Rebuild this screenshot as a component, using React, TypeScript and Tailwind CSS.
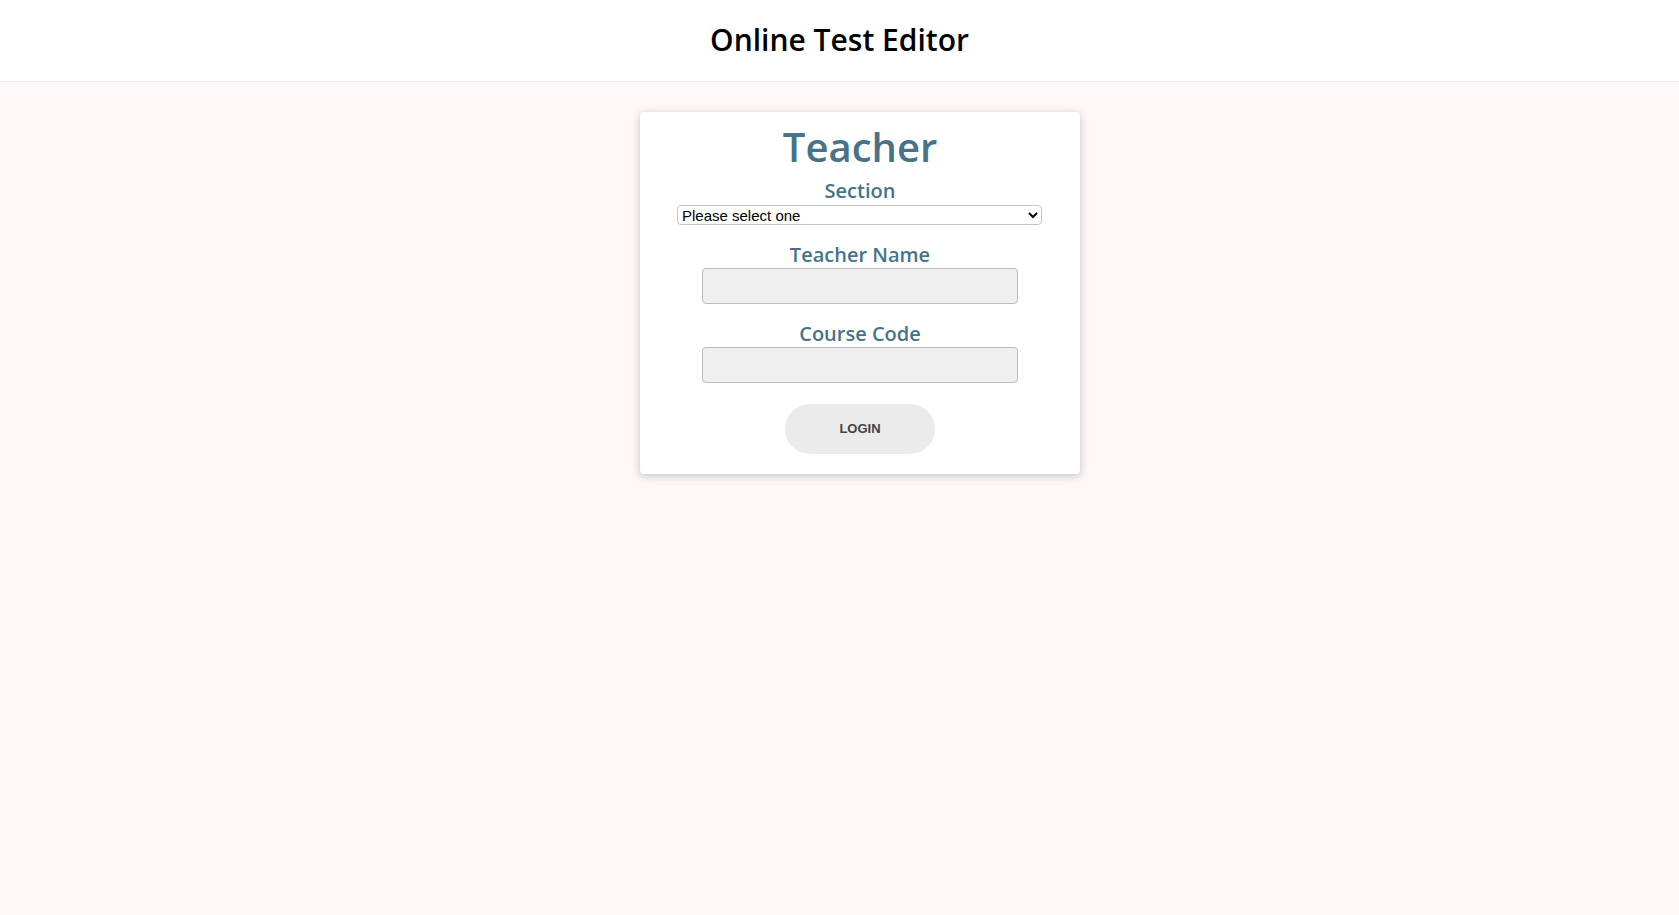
import { useState } from "react"

const sections = ["Please select one", "Section A", "Section B", "Section C"]

function Field({ label, value, onChange }: { label: string, value: string, onChange: (v: string) => void }) {
    return (
        <div className="flex flex-col items-center">
            <label className="h-[28px] text-[20px] leading-[30px] font-semibold text-[#47738a]">{label}</label>
            <input
                value={value}
                onChange={(e) => onChange(e.target.value)}
                className="w-[316px] h-[36px] bg-[#efefef] border border-[#bdbdbd] rounded-[4px] px-2 text-[15px] font-['Liberation_Sans',Arial,sans-serif] outline-none"
            />
        </div>
    )
}

export default function App() {
    const [section, setSection] = useState(sections[0])
    const [teacherName, setTeacherName] = useState("")
    const [courseCode, setCourseCode] = useState("")

    return (
        <div className="min-h-screen bg-[#fcf8f7] font-['Open_Sans',sans-serif]">
            <header className="h-[82px] bg-white border-b border-[#ebe9ef] flex justify-center items-center">
                <h1 className="text-[30px] font-semibold text-black pb-[2px]">Online Test Editor</h1>
            </header>

            <div className="flex justify-center pt-[30px] pl-[41px]">
                <div className="w-[440px] bg-white rounded-[4px] shadow-[0_2px_8px_rgba(0,0,0,0.22)] pt-[10px] pb-[20px] flex flex-col items-center">
                    <h2 className="h-[48px] text-[40px] leading-[50px] font-semibold text-[#47738a]">Teacher</h2>

                    <label className="mt-[6px] h-[28px] text-[20px] leading-[30px] font-semibold text-[#47738a]">Section</label>
                    <select
                        value={section}
                        onChange={(e) => setSection(e.target.value)}
                        className="mt-[1px] mr-[1px] w-[365px] h-[20px] border border-[#c4c4c4] rounded-[4px] bg-white text-black text-[15px] leading-[17px] font-['Liberation_Sans',Arial,sans-serif]"
                    >
                        {sections.map((s) => <option key={s}>{s}</option>)}
                    </select>

                    <div className="mt-[15px] flex flex-col gap-[15px]">
                        <Field label="Teacher Name" value={teacherName} onChange={setTeacherName} />
                        <Field label="Course Code" value={courseCode} onChange={setCourseCode} />
                    </div>

                    <button className="mt-[21px] w-[150px] h-[50px] rounded-full bg-[#ebebeb] text-[#444] text-[13px] font-bold font-['Liberation_Sans',Arial,sans-serif]">
                        LOGIN
                    </button>
                </div>
            </div>
        </div>
    )
}
